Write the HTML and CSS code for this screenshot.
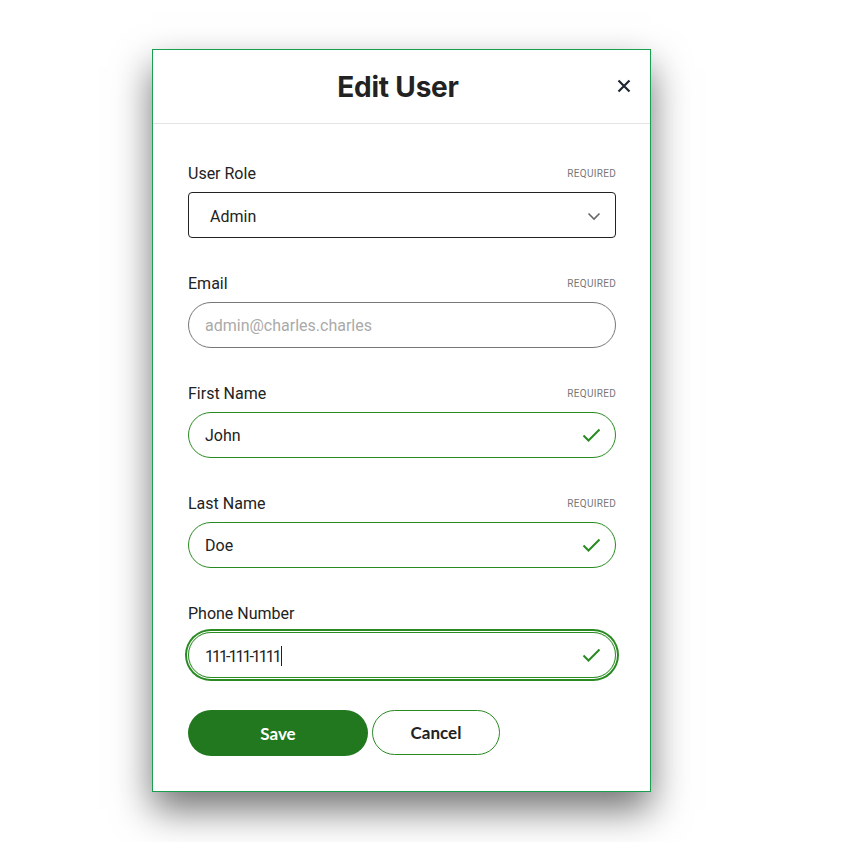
FILE: index.html
```html
<!DOCTYPE html>
<html lang="en">
<head>
    <meta charset="UTF-8">
    <meta name="viewport" content="width=device-width, initial-scale=1.0">
    <title>Edit User</title>
    <link rel="stylesheet" href="styles.css">
</head>
<body>
    <div class="page">
        <div class="modal">
            <div class="modal-header">
                <h2>Edit User</h2>
                <button class="close-btn" type="button" aria-label="Close">
                    <svg width="14" height="14" viewBox="0 0 14 14">
                        <path d="M1.5 1.5 L12.5 12.5 M12.5 1.5 L1.5 12.5" stroke="#1e2733" stroke-width="2.2" fill="none"/>
                    </svg>
                </button>
            </div>

            <form class="modal-body" id="editUserForm">
                <div class="form-group">
                    <div class="label-row">
                        <label>User Role</label>
                        <span class="required">REQUIRED</span>
                    </div>
                    <div class="select">
                        <span>Admin</span>
                        <svg width="14" height="9" viewBox="0 0 14 9">
                            <path d="M1.5 1.5 L7 7 L12.5 1.5" stroke="#666" stroke-width="1.6" fill="none"/>
                        </svg>
                    </div>
                </div>

                <div class="form-group">
                    <div class="label-row">
                        <label>Email</label>
                        <span class="required">REQUIRED</span>
                    </div>
                    <div class="field">
                        <span class="placeholder">admin@charles.charles</span>
                    </div>
                </div>

                <div class="form-group">
                    <div class="label-row">
                        <label>First Name</label>
                        <span class="required">REQUIRED</span>
                    </div>
                    <div class="field valid">
                        <span>John</span>
                        <svg class="check" width="19" height="15" viewBox="0 0 19 15">
                            <path d="M1.5 7.5 L6.5 12.5 L17.5 1.5" stroke="#2a8a22" stroke-width="2" fill="none"/>
                        </svg>
                    </div>
                </div>

                <div class="form-group">
                    <div class="label-row">
                        <label>Last Name</label>
                        <span class="required">REQUIRED</span>
                    </div>
                    <div class="field valid">
                        <span>Doe</span>
                        <svg class="check" width="19" height="15" viewBox="0 0 19 15">
                            <path d="M1.5 7.5 L6.5 12.5 L17.5 1.5" stroke="#2a8a22" stroke-width="2" fill="none"/>
                        </svg>
                    </div>
                </div>

                <div class="form-group">
                    <div class="label-row">
                        <label>Phone Number</label>
                    </div>
                    <div class="field valid focused">
                        <span class="phone">111-111-1111<i class="caret"></i></span>
                        <svg class="check" width="19" height="15" viewBox="0 0 19 15">
                            <path d="M1.5 7.5 L6.5 12.5 L17.5 1.5" stroke="#2a8a22" stroke-width="2" fill="none"/>
                        </svg>
                    </div>
                </div>

                <div class="actions">
                    <button type="submit" class="btn btn-primary">Save</button>
                    <button type="button" class="btn btn-secondary">Cancel</button>
                </div>
            </form>
        </div>
    </div>
</body>
</html>
```

FILE: styles.css
```css
body {
    margin: 0;
    background: #fff;
    font-family: Roboto, "Liberation Sans", sans-serif;
    color: #222;
}

.page {
    padding: 49px 0 60px 152px;
}

.modal {
    width: 499px;
    box-sizing: border-box;
    background: #fff;
    border: 1px solid #1a9e4f;
    box-shadow: 0 18px 36px rgba(0,0,0,0.55);
}

.modal-header {
    height: 73px;
    display: flex;
    align-items: center;
    justify-content: center;
    position: relative;
    border-bottom: 1px solid #e3e3e3;
    padding-right: 7px;
}

.modal-header h2 {
    margin: 0;
    font-family: Inter, "Liberation Sans", sans-serif;
    font-size: 28px;
    font-weight: 700;
    color: #222;
    letter-spacing: -0.2px;
}

.close-btn {
    position: absolute;
    right: 19px;
    top: 29px;
    border: none;
    background: none;
    padding: 0;
    width: 14px;
    height: 14px;
    display: flex;
}

.modal-body {
    padding: 39px 34px 35px 35px;
}

.form-group {
    margin-bottom: 35px;
}

.label-row {
    display: flex;
    justify-content: space-between;
    align-items: center;
    height: 20px;
    margin-bottom: 9px;
}

.label-row label {
    font-size: 16px;
    color: #222;
}

.required {
    font-size: 10px;
    color: #777;
    letter-spacing: 0.3px;
}

.select {
    height: 46px;
    box-sizing: border-box;
    border: 1px solid #222;
    border-radius: 4px;
    display: flex;
    align-items: center;
    justify-content: space-between;
    padding: 2px 14px 0 21px;
    font-size: 16px;
}

.field {
    height: 46px;
    box-sizing: border-box;
    border: 1px solid #777;
    border-radius: 23px;
    display: flex;
    align-items: center;
    justify-content: space-between;
    padding: 1px 14px 0 16px;
    font-size: 16px;
}

.field.valid {
    border-color: #2a8a22;
}

.field.focused {
    box-shadow: 0 0 0 1px #fff, 0 0 0 3px #2a8a22;
}

.placeholder {
    color: #aaa;
}

.phone {
    letter-spacing: -2px;
}

.caret {
    display: inline-block;
    width: 1px;
    height: 20px;
    background: #222;
    vertical-align: -4px;
    margin-left: 1px;
}

.actions {
    display: flex;
    gap: 4px;
    margin-top: -3px;
}

.btn {
    height: 46px;
    border-radius: 23px;
    font-family: Lato, "Liberation Sans", sans-serif;
    font-size: 17px;
    font-weight: 700;
    cursor: pointer;
}

.btn-primary {
    width: 180px;
    background: #21781e;
    color: #fff;
    border: none;
}

.btn-secondary {
    width: 128px;
    height: 45px;
    background: #fff;
    color: #222;
    border: 1px solid #2a8a22;
}
```
